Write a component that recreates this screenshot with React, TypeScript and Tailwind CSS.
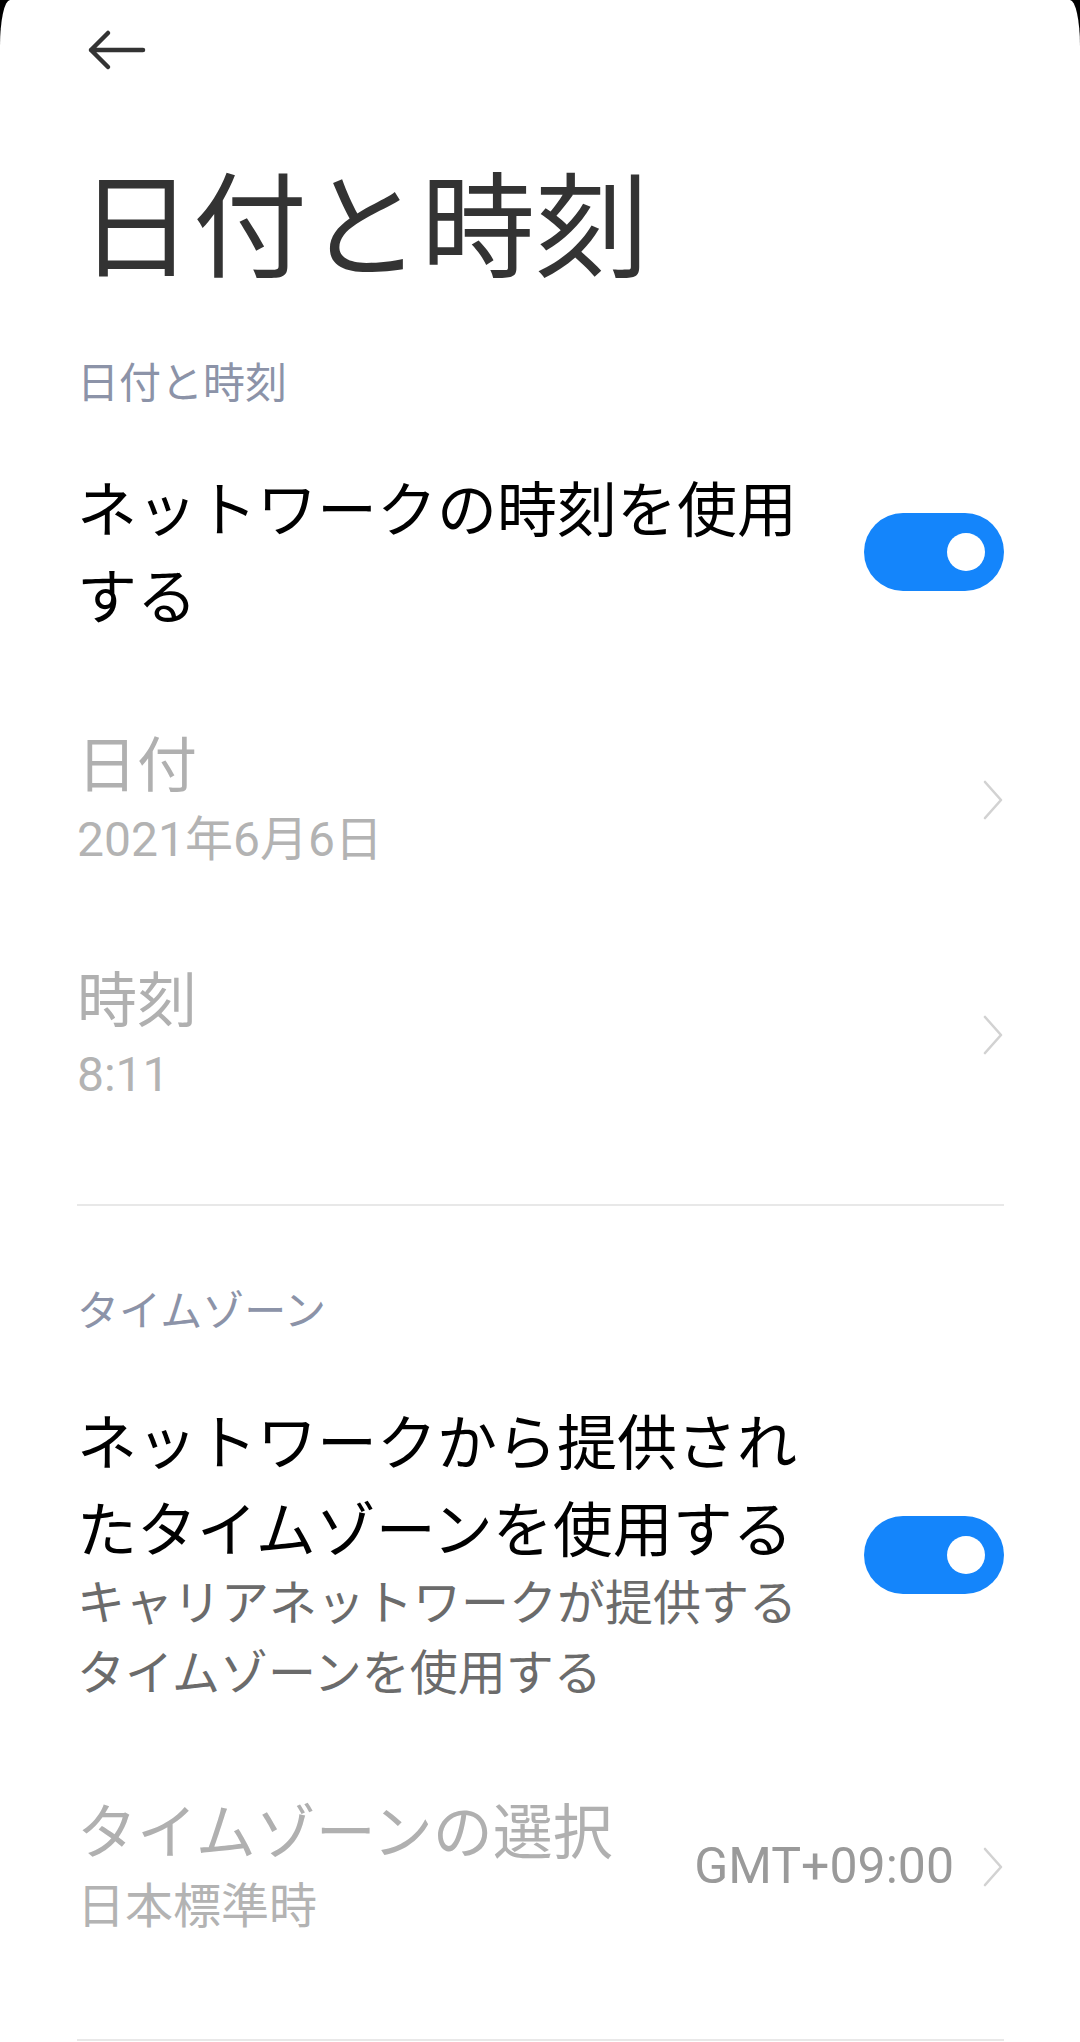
import React from 'react';

const font = "font-['Roboto','Noto_Sans_CJK_JP',sans-serif]";

function Toggle({ className = '' }: { className?: string }) {
  return (
    <div className={`flex h-[78px] w-[140px] shrink-0 items-center justify-end rounded-full bg-[#1485fb] pr-[19px] ${className}`}>
      <div className="h-[38px] w-[38px] rounded-full bg-white" />
    </div>
  );
}

function Chevron() {
  return (
    <svg width="22" height="40" viewBox="0 0 22 40" fill="none" className="shrink-0">
      <path d="M3 2 L19 20 L3 38" stroke="#d2d2d2" strokeWidth="2.6" strokeLinecap="round" strokeLinejoin="round" />
    </svg>
  );
}

function SectionHeader({ children, className = '' }: { children: React.ReactNode; className?: string }) {
  return (
    <div className={`h-[52px] text-[42px] leading-[52px] text-[#8c93a8] ${className}`}>{children}</div>
  );
}

export default function App() {
  return (
    <div className={`min-h-[2042px] w-[1080px] bg-black ${font}`}>
      <div className="h-[2042px] overflow-hidden rounded-tl-[10px_46px] rounded-tr-[10px_46px] bg-white">
        {/* Top bar */}
        <div className="flex h-[100px] items-center pl-[86px]">
          <svg width="60" height="42" viewBox="0 0 60 42" fill="none">
            <path d="M5 21 H57 M22 4 L5 21 L22 38" stroke="#333333" strokeWidth="4.5" strokeLinecap="round" strokeLinejoin="round" />
          </svg>
        </div>

        {/* Page title */}
        <h1 className="h-[258px] pl-[79px] text-[114px] font-normal leading-[258px] text-[#333333]">日付と時刻</h1>

        <div className="pl-[77px] pr-[76px]">
          <SectionHeader>日付と時刻</SectionHeader>

          {/* Network time */}
          <div className="flex items-center justify-between pt-[58px]">
            <div className="w-[745px] text-[60px] leading-[87px] text-black">ネットワークの時刻を使用する</div>
            <Toggle className="mb-[7px]" />
          </div>

          {/* Date */}
          <div className="flex items-center justify-between pt-[89px]">
            <div>
              <div className="text-[60px] leading-[72px] text-[#b0b0b0]">日付</div>
              <div className="text-[48px] leading-[73px] text-[#b3b3b3]">2021年6月6日</div>
            </div>
            <div className="mb-[8px]">
              <Chevron />
            </div>
          </div>

          {/* Time */}
          <div className="flex items-center justify-between pt-[90px]">
            <div>
              <div className="text-[60px] leading-[72px] text-[#b0b0b0]">時刻</div>
              <div className="text-[48px] leading-[73px] text-[#b3b3b3]">8:11</div>
            </div>
            <div className="mb-[8px]">
              <Chevron />
            </div>
          </div>

          <div className="mt-[93px] h-[2px] bg-[#e8e8e8]" />

          <SectionHeader className="mt-[80px]">タイムゾーン</SectionHeader>

          {/* Network-provided time zone */}
          <div className="flex items-center justify-between pt-[63px]">
            <div className="w-[745px]">
              <div className="text-[60px] leading-[87px] text-black">ネットワークから提供されたタイムゾーンを使用する</div>
              <div className="mt-[-6px] text-[48px] leading-[70px] text-[#6b6b6b]">キャリアネットワークが提供するタイムゾーンを使用する</div>
            </div>
            <Toggle />
          </div>

          {/* Time zone select */}
          <div className="flex items-center justify-between pt-[89px]">
            <div>
              <div className="text-[60px] leading-[72px] text-[#b0b0b0]">タイムゾーンの選択</div>
              <div className="text-[48px] leading-[73px] text-[#b3b3b3]">日本標準時</div>
            </div>
            <div className="mb-[8px] flex items-center gap-[28px]">
              <span className="text-[50px] text-[#9a9a9a]">GMT+09:00</span>
              <Chevron />
            </div>
          </div>

          <div className="mt-[96px] h-[2px] bg-[#e8e8e8]" />
        </div>
      </div>
    </div>
  );
}
